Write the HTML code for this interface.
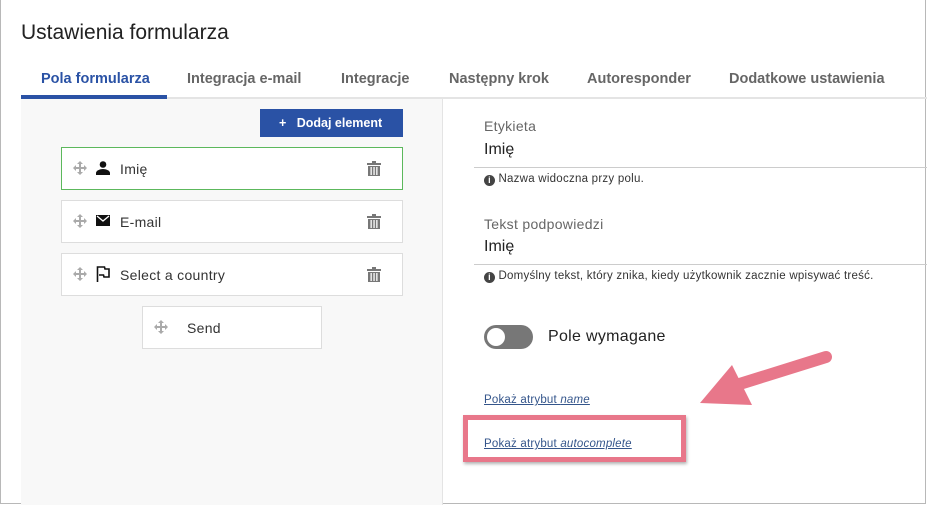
<!DOCTYPE html>
<html><head><meta charset="utf-8"><style>
*{box-sizing:border-box;margin:0;padding:0}
body{width:927px;height:505px;background:#fff;font-family:"Liberation Sans",sans-serif;position:relative;overflow:hidden;color:#222}
.frame{position:absolute;left:0;top:0;width:926px;height:504px;border:1px solid #b8b8b8;border-top:none}
.abs{position:absolute;white-space:nowrap}
.tab{position:absolute;top:71px;font-size:14.5px;font-weight:bold;color:#666}
.left{position:absolute;left:21px;top:99px;width:422px;height:406px;background:#f8f8f8;border-right:1px solid #e4e4e4}
.item{position:absolute;left:61px;width:342px;height:43px;background:#fff;border:1px solid #ddd}
.item .t{position:absolute;left:58px;top:13px;font-size:14px;color:#333;letter-spacing:.3px}
.mv{position:absolute;left:11px;top:13px}
.trash{position:absolute;left:305px;top:13px}
.lbl{font-size:14px;color:#666;letter-spacing:.3px}
.val{font-size:16px;color:#222}
.info{font-size:11.5px;color:#333;letter-spacing:.25px}
.line{position:absolute;left:474px;width:453px;height:1px;background:#ccc}
a{color:#34558b;font-size:11.5px;text-decoration:underline;letter-spacing:.2px}
</style></head><body>
<div class="frame"></div>
<div class="abs" style="left:21px;top:21px;font-size:21px;color:#222">Ustawienia formularza</div>
<div class="tab" style="left:41px;color:#2a52a5">Pola formularza</div>
<div class="tab" style="left:187px">Integracja e-mail</div>
<div class="tab" style="left:341px">Integracje</div>
<div class="tab" style="left:449px">Następny krok</div>
<div class="tab" style="left:587px">Autoresponder</div>
<div class="tab" style="left:729px">Dodatkowe ustawienia</div>
<div class="abs" style="left:21px;top:97px;width:906px;height:2px;background:#e4e4e4"></div>
<div class="abs" style="left:21px;top:95px;width:146px;height:4px;background:#2a52a5"></div>
<div class="left"></div>
<div class="abs" style="left:260px;top:109px;width:143px;height:28px;background:#2a52a5;color:#fff;font-size:12.5px;font-weight:bold;padding:7px 0 0 19px">+&nbsp;&nbsp; Dodaj element</div>

<svg width="0" height="0" style="position:absolute"><defs>
<g id="mv" fill="#aaa"><path d="M7 0l3 3H8v3h3V4l3 3-3 3V8H8v3h2l-3 3-3-3h2V8H3v2L0 7l3-3v2h3V3H4z"/></g>
<g id="tr" fill="#777"><rect x="0" y="2" width="14" height="2"/><rect x="5" y="0" width="4" height="2"/><path d="M1 5h12v10H1z"/><rect x="3.5" y="6" width="1.3" height="8" fill="#fff"/><rect x="6.4" y="6" width="1.3" height="8" fill="#fff"/><rect x="9.2" y="6" width="1.3" height="8" fill="#fff"/></g>
</defs></svg>

<div class="item" style="top:147px;border-color:#5cb85c"><svg class="mv" width="14" height="14"><use href="#mv"/></svg>
<svg class="abs" style="left:34px;top:13px" width="14" height="14"><circle cx="7" cy="3.5" r="3.3" fill="#111"/><path d="M0 14v-2c0-2.5 4-4 7-4s7 1.5 7 4v2z" fill="#111"/></svg>
<div class="t">Imię</div><svg class="trash" width="14" height="15"><use href="#tr"/></svg></div>
<div class="item" style="top:200px"><svg class="mv" width="14" height="14"><use href="#mv"/></svg>
<svg class="abs" style="left:34px;top:14px" width="14" height="11"><rect width="14" height="11" fill="#111"/><path d="M1 1l6 5 6-5" stroke="#fff" stroke-width="1.3" fill="none"/></svg>
<div class="t">E-mail</div><svg class="trash" width="14" height="15"><use href="#tr"/></svg></div>
<div class="item" style="top:253px"><svg class="mv" width="14" height="14"><use href="#mv"/></svg>
<svg class="abs" style="left:34px;top:12px" width="14" height="16"><path d="M1.5 16V1h7l.5 2h4v8H8l-.5-2H3" stroke="#111" stroke-width="1.6" fill="none"/></svg>
<div class="t">Select a country</div><svg class="trash" width="14" height="15"><use href="#tr"/></svg></div>
<div class="item" style="top:306px;left:142px;width:180px"><svg class="mv" width="14" height="14"><use href="#mv"/></svg><div class="t" style="left:44px">Send</div></div>

<div class="abs lbl" style="left:484px;top:118px">Etykieta</div>
<div class="abs val" style="left:484px;top:141px">Imię</div>
<div class="line" style="top:167px"></div>
<div class="abs info" style="left:484px;top:173px"><span style="display:inline-block;width:11px;height:11px;border-radius:50%;background:#444;color:#fff;font-size:9px;text-align:center;line-height:11px;font-weight:bold;vertical-align:-1px">i</span> Nazwa widoczna przy polu.</div>
<div class="abs lbl" style="left:484px;top:216px">Tekst podpowiedzi</div>
<div class="abs val" style="left:484px;top:238px">Imię</div>
<div class="line" style="top:264px"></div>
<div class="abs info" style="left:484px;top:270px"><span style="display:inline-block;width:11px;height:11px;border-radius:50%;background:#444;color:#fff;font-size:9px;text-align:center;line-height:11px;font-weight:bold;vertical-align:-1px">i</span> Domyślny tekst, który znika, kiedy użytkownik zacznie wpisywać treść.</div>
<div class="abs" style="left:484px;top:325px;width:49px;height:24px;border-radius:12px;background:#777"></div>
<div class="abs" style="left:487px;top:328px;width:18px;height:18px;border-radius:50%;background:#fff"></div>
<div class="abs" style="left:548px;top:328px;font-size:16px;color:#222;letter-spacing:.3px">Pole wymagane</div>
<div class="abs" style="left:484px;top:390px"><a>Pokaż atrybut <i>name</i></a></div>
<div class="abs" style="left:463px;top:415px;width:223px;height:47px;border:5px solid #e8778a;box-shadow:1px 2px 3px rgba(0,0,0,.3)"></div>
<div class="abs" style="left:484px;top:434px"><a>Pokaż atrybut <i>autocomplete</i></a></div>
<svg class="abs" style="left:690px;top:345px" width="150" height="70"><path d="M136 12L40 42" stroke="#e8778a" stroke-width="12" stroke-linecap="round"/><path d="M10 58L42 20L62 60z" fill="#e8778a"/></svg>
</body></html>
